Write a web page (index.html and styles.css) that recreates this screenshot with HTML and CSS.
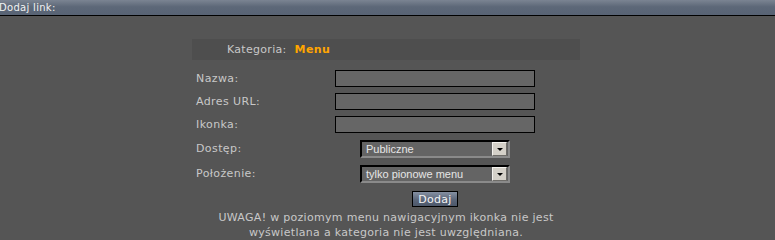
FILE: index.html
```html
<!DOCTYPE html>
<html lang="pl">
<head>
  <meta charset="UTF-8">
  <title>Dodaj link</title>
  <link rel="stylesheet" href="styles.css">
</head>
<body>
  <div class="titlebar">Dodaj link:</div>
  <div class="content">
    <form class="panel">
      <div class="category">
        <span class="category-label">Kategoria:</span>
        <span class="category-name">Menu</span>
      </div>
      <div class="row">
        <label class="label">Nazwa:</label>
        <div class="field"><input type="text" class="textbox"></div>
      </div>
      <div class="row">
        <label class="label">Adres URL:</label>
        <div class="field"><input type="text" class="textbox"></div>
      </div>
      <div class="row">
        <label class="label">Ikonka:</label>
        <div class="field"><input type="text" class="textbox"></div>
      </div>
      <div class="row row-select">
        <label class="label">Dostęp:</label>
        <div class="field">
          <div class="select">
            <span class="select-value">Publiczne</span>
            <span class="select-arrow"></span>
          </div>
        </div>
      </div>
      <div class="row row-select">
        <label class="label">Położenie:</label>
        <div class="field">
          <div class="select">
            <span class="select-value">tylko pionowe menu</span>
            <span class="select-arrow"></span>
          </div>
        </div>
      </div>
      <div class="actions">
        <button type="button" class="submit">Dodaj</button>
      </div>
      <p class="note">UWAGA! w poziomym menu nawigacyjnym ikonka nie jest<br>wyświetlana a kategoria nie jest uwzględniana.</p>
    </form>
  </div>
</body>
</html>
```

FILE: styles.css
```css
body {
  margin: 0;
  background-color: #555555;
  font-family: "DejaVu Sans", Verdana, sans-serif;
  font-size: 11px;
  color: #c8c8c8;
}

.titlebar {
  height: 15px;
  line-height: 15px;
  border-bottom: 1px solid #000;
  background: linear-gradient(#7b8492, #5d6878 45%, #586374);
  color: #f2f2f2;
  font-size: 10px;
  letter-spacing: 0.3px;
  margin-left: -1px;
  overflow: hidden;
  white-space: nowrap;
}

.content {
  padding-right: 3px;
}

.panel {
  width: 388px;
  margin: 23px auto 0;
}

.category {
  height: 21px;
  background-color: #4e4e4e;
  display: flex;
  align-items: center;
  padding-left: 35px;
  margin-bottom: 7px;
}

.category-label {
  letter-spacing: 0.3px;
}

.category-name {
  color: #ffa500;
  font-weight: bold;
  margin-left: 8px;
  letter-spacing: 0.4px;
}

.row {
  display: grid;
  grid-template-columns: 143px 200px;
  align-items: center;
  height: 23px;
}

.row-select {
  height: 25px;
}

.label {
  padding-left: 4px;
  letter-spacing: 0.4px;
}

.field {
  display: flex;
  justify-content: center;
}

.textbox {
  box-sizing: border-box;
  width: 200px;
  height: 17px;
  margin: 0;
  border: 1px solid #000;
  background-color: #666666;
  color: #e0e0e0;
  font-family: inherit;
  font-size: 11px;
}

.select {
  box-sizing: border-box;
  width: 150px;
  height: 18px;
  display: flex;
  align-items: center;
  background-color: #646464;
  border-top: 2px solid #000;
  border-left: 2px solid #000;
  border-right: 2px solid #8a8a8a;
  border-bottom: 2px solid #8a8a8a;
}

.select-value {
  flex: 1;
  padding-left: 4px;
  font-family: "Liberation Sans", Arial, sans-serif;
  font-size: 11px;
  color: #e6e6e6;
  white-space: nowrap;
  overflow: hidden;
}

.select-arrow {
  box-sizing: border-box;
  width: 15px;
  height: 14px;
  margin-right: 1px;
  background-color: #d4d0c8;
  border-top: 1px solid #f4f2ee;
  border-left: 1px solid #f4f2ee;
  border-right: 1px solid #6e6c68;
  border-bottom: 1px solid #6e6c68;
  display: flex;
  align-items: center;
  justify-content: center;
}

.select-arrow::after {
  content: "";
  border-left: 3px solid transparent;
  border-right: 3px solid transparent;
  border-top: 3px solid #000;
  margin-top: 1px;
}

.actions {
  display: grid;
  grid-template-columns: 143px 200px;
  margin-top: 5px;
}

.submit {
  grid-column: 2;
  justify-self: center;
  box-sizing: border-box;
  width: 46px;
  height: 16px;
  padding: 0;
  border: 1px solid #000;
  background: linear-gradient(#8590a2, #5b6679 55%, #4d586a);
  color: #f4f4f4;
  font-family: inherit;
  font-size: 11px;
  letter-spacing: 0.3px;
}

.note {
  margin: 3px 0 0;
  text-align: center;
  line-height: 15px;
  letter-spacing: 0.3px;
}
```
